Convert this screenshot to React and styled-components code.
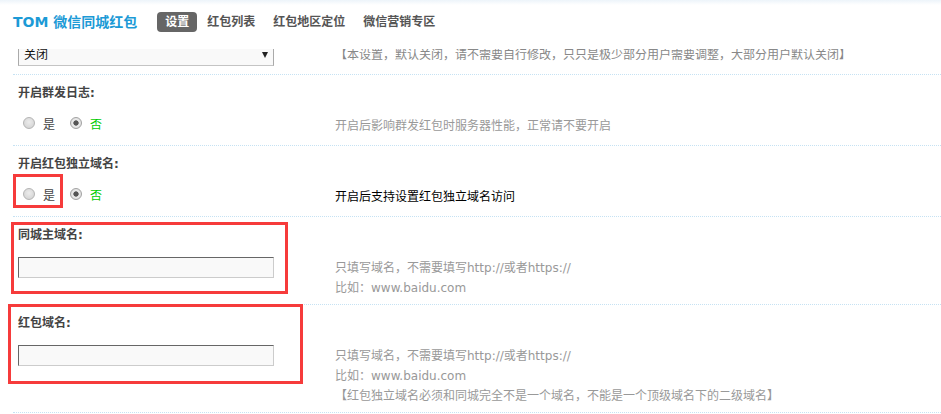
import styled, { createGlobalStyle } from "styled-components";

const GlobalStyle = createGlobalStyle`
  html, body { margin: 0; padding: 0; background: #fff; }
  body {
    font-family: "DejaVu Sans", "Noto Sans CJK SC", sans-serif;
    font-size: 12px;
    color: #444;
  }
`;

const Header = styled.header`
  position: fixed;
  top: 0;
  left: 0;
  right: 0;
  height: 49px;
  z-index: 5;
  display: flex;
  align-items: flex-start;
  gap: 20px;
  padding: 12px 0 0 13px;
  box-sizing: border-box;
  background: linear-gradient(#edf4fa, #fff 5px);
`;

const Title = styled.div`
  font-size: 14px;
  line-height: 20px;
  font-weight: bold;
  color: #1c9ad6;
`;

const Nav = styled.nav`
  display: flex;
  gap: 2px;
`;

const NavItem = styled.a`
  padding: 0 8px;
  line-height: 20px;
  font-weight: bold;
  border-radius: 4px;
  color: ${(p) => (p.$active ? "#fff" : "#555")};
  background: ${(p) => (p.$active ? "#666" : "transparent")};
  cursor: pointer;
`;

// page is scrolled a little: the first block's label sits under the fixed header
const Main = styled.main`
  padding: 33px 0 0 13px;
`;

const Block = styled.section`
  position: relative;
  border-bottom: 1px dotted #c6e2f3;
`;

const Label = styled.div`
  padding: 8px 5px 1px;
  line-height: 20px;
  font-weight: bold;
  color: #444;
`;

const Body = styled.div`
  display: flex;
  align-items: flex-start;
  min-height: 41px;
  box-sizing: border-box;
  padding: 7px 0 6px;
`;

const Control = styled.div`
  flex: none;
  width: 322px;
  padding-left: 5px;
  box-sizing: border-box;
`;

const Tip = styled.div`
  padding-top: 5px;
  line-height: 20px;
  color: ${(p) => p.$color || "#999"};
`;

const SelectBox = styled.div`
  position: relative;
  margin-top: 4px;
  width: 256px;
  height: 22px;
  box-sizing: border-box;
  border: 1px solid #aaa;
  border-bottom-color: #c4c4c4;
  background: #f9f9f9;
  padding-left: 5px;
  line-height: 20px;
  color: #111;
  &::after {
    content: "";
    position: absolute;
    right: 5px;
    top: 7px;
    border-left: 3.5px solid transparent;
    border-right: 3.5px solid transparent;
    border-top: 6px solid #222;
  }
`;

const TextInput = styled.input`
  display: block;
  margin: 4px 0 0;
  width: 256px;
  height: 21px;
  box-sizing: border-box;
  border: 1px solid #ccc;
  border-top-color: #666;
  border-left-color: #666;
  background: #f9f9f9;
  outline: none;
`;

const RadioGroup = styled.div`
  display: flex;
  align-items: center;
  height: 20px;
  margin-top: 2px;
  padding-left: 5px;
  gap: 15px;
`;

const RadioLabel = styled.label`
  display: inline-flex;
  align-items: center;
  gap: 8px;
  color: ${(p) => (p.$on ? "#00cc00" : "#444")};
`;

const Radio = styled.input.attrs({ type: "radio" })`
  appearance: none;
  margin: 0;
  width: 12px;
  height: 12px;
  border-radius: 50%;
  box-sizing: border-box;
  border: 1px solid #b4b4b4;
  background: radial-gradient(circle at 50% 40%, #ececec, #cfcfcf);
  &:checked {
    border-color: #a2a2a2;
    background: radial-gradient(circle, #555 0 2.3px, #ececec 3px, #d4d4d4 100%);
  }
`;

const Mark = styled.div`
  position: absolute;
  top: ${(p) => p.$top}px;
  left: ${(p) => p.$left}px;
  width: ${(p) => p.$w}px;
  height: ${(p) => p.$h}px;
  border: 3px solid #f63b3b;
  box-sizing: border-box;
  pointer-events: none;
`;

function YesNo({ name }) {
  return (
    <RadioGroup>
      <RadioLabel>
        <Radio name={name} readOnly />
        是
      </RadioLabel>
      <RadioLabel $on>
        <Radio name={name} defaultChecked />
        否
      </RadioLabel>
    </RadioGroup>
  );
}

export default function App() {
  return (
    <>
      <GlobalStyle />
      <Header>
        <Title>TOM 微信同城红包</Title>
        <Nav>
          <NavItem $active>设置</NavItem>
          <NavItem>红包列表</NavItem>
          <NavItem>红包地区定位</NavItem>
          <NavItem>微信营销专区</NavItem>
        </Nav>
      </Header>
      <Main>
        <Block>
          <Body>
            <Control>
              <SelectBox>关闭</SelectBox>
            </Control>
            <Tip $color="#888">
              【本设置，默认关闭，请不需要自行修改，只只是极少部分用户需要调整，大部分用户默认关闭】
            </Tip>
          </Body>
        </Block>
        <Block>
          <Label>开启群发日志:</Label>
          <Body>
            <Control>
              <YesNo name="log" />
            </Control>
            <Tip>开启后影响群发红包时服务器性能，正常请不要开启</Tip>
          </Body>
        </Block>
        <Block>
          <Label>开启红包独立域名:</Label>
          <Body>
            <Control>
              <YesNo name="domain" />
            </Control>
            <Tip $color="#000">开启后支持设置红包独立域名访问</Tip>
          </Body>
          <Mark $top={28} $left={0} $w={50} $h={34} />
        </Block>
        <Block>
          <Label>同城主域名:</Label>
          <Body>
            <Control>
              <TextInput />
            </Control>
            <Tip>
              只填写域名，不需要填写http://或者https://
              <br />
              比如：www.baidu.com
            </Tip>
          </Body>
          <Mark $top={5} $left={-2} $w={277} $h={72} />
        </Block>
        <Block>
          <Label>红包域名:</Label>
          <Body>
            <Control>
              <TextInput />
            </Control>
            <Tip>
              只填写域名，不需要填写http://或者https://
              <br />
              比如：www.baidu.com
              <br />
              【红包独立域名必须和同城完全不是一个域名，不能是一个顶级域名下的二级域名】
            </Tip>
          </Body>
          <Mark $top={-1} $left={-5} $w={295} $h={80} />
        </Block>
      </Main>
    </>
  );
}
